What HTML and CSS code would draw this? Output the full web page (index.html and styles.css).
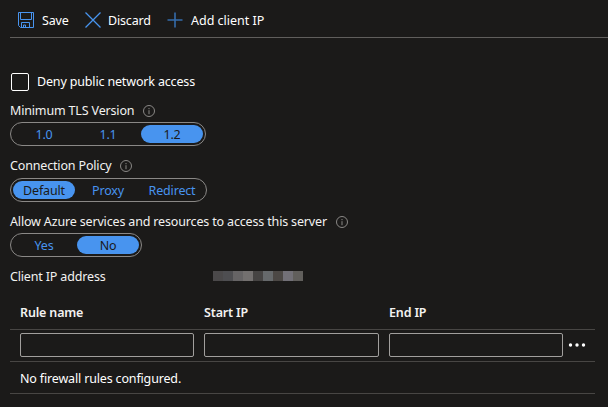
FILE: index.html
```html
<!DOCTYPE html>
<html lang="en">
<head>
<meta charset="utf-8">
<title>Firewall settings</title>
<link rel="stylesheet" href="styles.css">
</head>
<body>
<header class="toolbar">
  <button class="command save"><svg width="16" height="16" viewBox="0 0 16 16"><path d="M.5.5h15v15h-13l-2-2zM2.5.5v7h11v-7M3.500 15.500v-5h8v5M5.500 15.500v-2.500h2v2.500"/></svg><span>Save</span></button>
  <button class="command discard"><svg width="16" height="16" viewBox="0 0 16 16"><path class="cross" d="M.5.5l15 15M15.500.5l-15 15"/></svg><span>Discard</span></button>
  <button class="command add"><svg width="16" height="16" viewBox="0 0 16 16"><path class="plus" d="M8 .5v15M.5 8h15"/></svg><span>Add client IP</span></button>
</header>
<main>
  <label class="deny"><input type="checkbox"><span>Deny public network access</span></label>

  <div class="label tls"><span>Minimum TLS Version</span><svg class="info" width="12" height="12" viewBox="0 0 12 12"><circle cx="6" cy="6" r="5.500"/><path d="M6 3v1.200M6 5.200v4"/></svg></div>
  <div class="switch"><span>1.0</span><span>1.1</span><span class="on">1.2</span></div>

  <div class="label policy"><span>Connection Policy</span><svg class="info" width="12" height="12" viewBox="0 0 12 12"><circle cx="6" cy="6" r="5.500"/><path d="M6 3v1.200M6 5.200v4"/></svg></div>
  <div class="switch wide"><span class="on">Default</span><span>Proxy</span><span>Redirect</span></div>

  <div class="label azure"><span>Allow Azure services and resources to access this server</span><svg class="info" width="12" height="12" viewBox="0 0 12 12"><circle cx="6" cy="6" r="5.500"/><path d="M6 3v1.200M6 5.200v4"/></svg></div>
  <div class="switch pair"><span>Yes</span><span class="on">No</span></div>

  <div class="client"><span>Client IP address</span><div class="redacted"><i></i><i></i><i></i><i></i><i></i><i></i><i></i><i></i><i></i></div></div>

  <section class="rules">
    <div class="row head"><span class="rule-name">Rule name</span><span>Start IP</span><span>End IP</span></div>
    <div class="row entry"><input type="text" aria-label="Rule name"><input type="text" aria-label="Start IP"><input type="text" aria-label="End IP"><svg class="more" width="18" height="6" viewBox="0 0 18 6"><circle cx="2.500" cy="3" r="1.700"/><circle cx="9" cy="3" r="1.700"/><circle cx="15.500" cy="3" r="1.700"/></svg></div>
    <div class="row empty">No firewall rules configured.</div>
  </section>
</main>
</body>
</html>
```
FILE: styles.css
```css
* { box-sizing: border-box; }
body {
  margin: 0;
  height: 407px;
  overflow: hidden;
  background: #1b1a19;
  color: #fff;
  font: 12.5px/20px "Noto Sans", "Open Sans", sans-serif;
  letter-spacing: -0.160px;
  white-space: nowrap;
}
svg { display: block; flex: none; fill: none; }
.toolbar {
  display: flex;
  align-items: center;
  height: 38px;
  margin-left: 10px;
  padding: 2px 0 0 8px;
  border-bottom: 1px solid #605e5c;
}
.command {
  display: flex;
  align-items: center;
  gap: 8px;
  padding: 0;
  border: 0;
  background: none;
  color: inherit;
  font: inherit;
  letter-spacing: inherit;
}
.command span { padding-top: 2px; }
.command svg { stroke: #4894ef; }
.save { width: 67px; }
.discard { width: 82px; }
.discard span { margin-left: -1px; }
.add { letter-spacing: 0; }
.command .cross { stroke-width: 1.3; }
.command .plus { stroke: #356cab; stroke-width: 1.6; }
main { padding: 35px 13px 0 10px; }
.deny { display: flex; align-items: center; height: 18px; gap: 8px; padding-left: 1px; }
.deny input {
  appearance: none;
  width: 18px;
  height: 18px;
  margin: 0;
  border: 1px solid #fff;
  border-radius: 2px;
}
.label { display: flex; align-items: center; height: 20px; gap: 9px; color: #f3f2f1; }
.tls { margin: 10px 0 1px; }
.policy { margin: 10px 0 2px; }
.azure { margin: 10px 0 1px; }
.info { stroke: #8a8886; }
.switch {
  display: flex;
  width: 196px;
  height: 24px;
  padding: 2px;
  gap: 2px;
  border: 1px solid #8a8886;
  border-radius: 12px;
  color: #4894ef;
}
.switch span { width: 62px; height: 18px; line-height: 19px; text-align: center; border-radius: 9px; }
.switch .on { background: #4894ef; color: #1b1a19; }
.wide { width: 197px; }
.pair { width: 132px; }
.client { display: flex; align-items: center; height: 20px; margin-top: 9px; color: #f3f2f1; }
.client > span { width: 203px; padding-top: 1px; }
.redacted { display: flex; }
.redacted i { width: 10px; height: 10px; background: #4b494a; }
.redacted i:nth-child(2) { background: #4e4e51; }
.redacted i:nth-child(3) { background: #666465; }
.redacted i:nth-child(4) { background: #73706f; }
.redacted i:nth-child(5) { background: #464443; }
.redacted i:nth-child(6) { background: #66696b; }
.redacted i:nth-child(7) { background: #4c4845; }
.redacted i:nth-child(8) { background: #727077; }
.redacted i:nth-child(9) { background: #615f5c; }
.rules { margin-top: 10px; }
.row { display: flex; align-items: center; height: 32px; padding-left: 10px; border-bottom: 1px solid #484644; }
.head { height: 34px; font-weight: 600; color: #f3f2f1; }
.head span { width: 185px; }
.head .rule-name { width: 184px; }
.entry { gap: 10px; padding-bottom: 1px; }
.entry input {
  width: 174px;
  height: 24px;
  margin: 0;
  border: 1px solid #a19f9d;
  border-radius: 2px;
  background: none;
}
.entry input:nth-child(2) { width: 175px; }
.more { margin-left: -5px; fill: #fff; }
.empty { padding-top: 2px; }
```
